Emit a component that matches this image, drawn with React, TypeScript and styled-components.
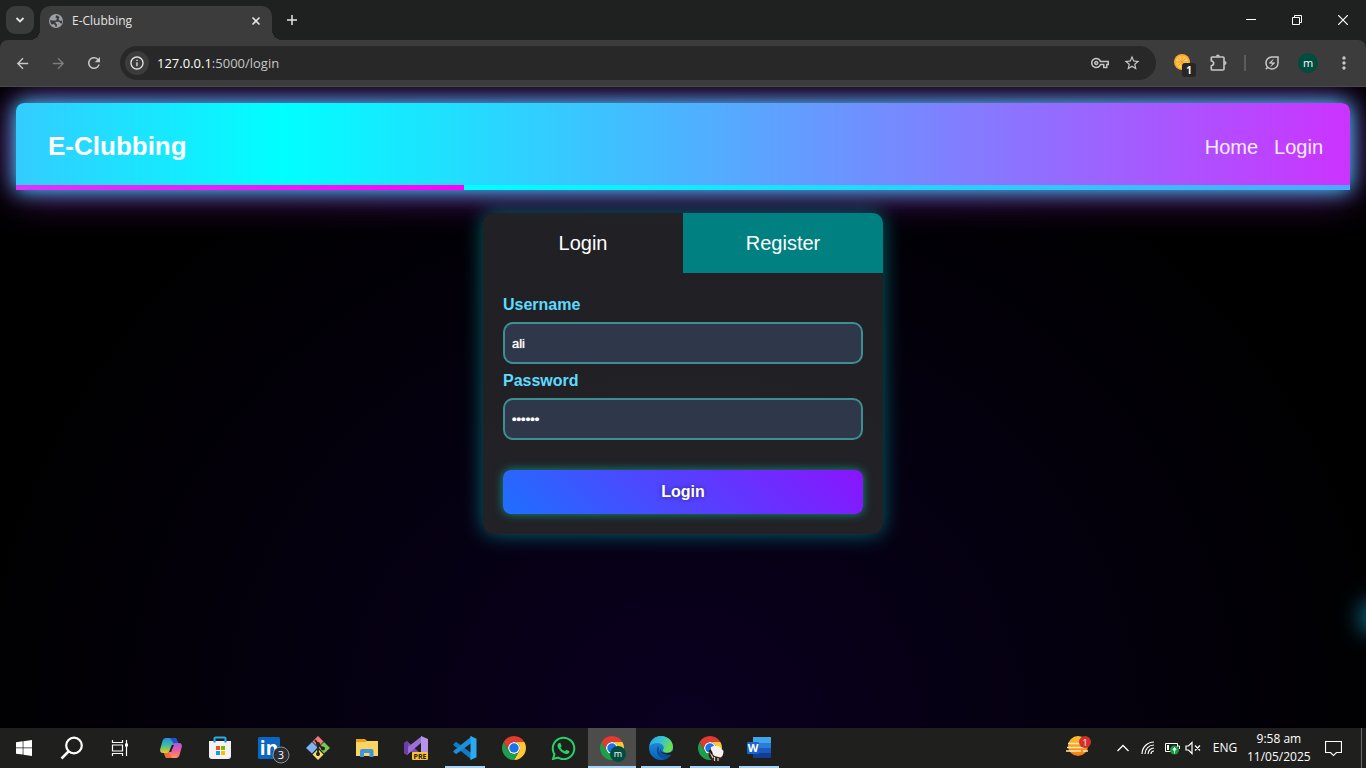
import React from "react";
import styled, { createGlobalStyle } from "styled-components";
import {
  MdArrowBack, MdArrowForward, MdRefresh, MdInfoOutline, MdStarOutline,
  MdOutlineVpnKey, MdOutlineEnergySavingsLeaf, MdMoreVert,
} from "react-icons/md";
import { FaWhatsapp } from "react-icons/fa";

const ui = `"Segoe UI", "Open Sans", sans-serif`;
const arial = `Arial, "Liberation Sans", sans-serif`;

const GlobalStyle = createGlobalStyle`
  *, *::before, *::after { box-sizing: border-box; }
  body { margin: 0; background: #000; font-family: ${arial}; }
  button { border: 0; padding: 0; background: none; color: inherit; font: inherit; cursor: pointer; }
  svg { display: block; flex: none; }
`;

const Desktop = styled.div`
  display: flex;
  flex-direction: column;
  height: 100vh;
  overflow: hidden;
`;

/* ---------- browser frame ---------- */
const TabStrip = styled.div`
  display: flex;
  height: 40px;
  flex: none;
  background: #1f2120;
  color: #e3e3e3;
  font-family: ${ui};
`;
const TabSearch = styled.button`
  display: grid;
  place-items: center;
  width: 28px;
  height: 28px;
  margin: 6px 6px 0;
  border-radius: 9px;
  background: #3a3b3b;
`;
const Tab = styled.div`
  position: relative;
  display: flex;
  align-items: center;
  gap: 8px;
  width: 232px;
  height: 34px;
  margin-top: 6px;
  padding: 0 9px 5px 8px;
  border-radius: 10px 10px 0 0;
  background: #3c3c3c;
  font-size: 12px;
  line-height: 16px;
  &::before, &::after {
    content: "";
    position: absolute;
    bottom: 0;
    width: 10px;
    height: 10px;
  }
  &::before { right: 100%; background: radial-gradient(circle at 0 0, transparent 10px, #3c3c3c 10px); }
  &::after { left: 100%; background: radial-gradient(circle at 100% 0, transparent 10px, #3c3c3c 10px); }
`;
const TabTitle = styled.span`
  flex: 1;
`;
const PlainButton = styled.button<{ $w: number }>`
  display: grid;
  place-items: center;
  width: ${(p) => p.$w}px;
  height: 100%;
`;
const WindowControls = styled.div`
  display: flex;
  margin-left: auto;
  color: #fff;
`;
const ToolbarBack = styled.div`
  flex: none;
  background: #1f2120;
`;
const Toolbar = styled.div`
  display: flex;
  align-items: center;
  height: 47px;
  padding: 0 4px;
  border-bottom: 1px solid #4a4a4a;
  border-radius: 8px 8px 0 0;
  background: #3c3c3c;
  color: #c7c7c7;
  font-family: ${ui};
`;
const ToolButton = styled.button<{ $dim?: boolean }>`
  display: grid;
  place-items: center;
  width: 36px;
  height: 34px;
  color: ${(p) => (p.$dim ? "#7c7c7c" : "#c7c7c7")};
`;
const Omnibox = styled.div`
  display: flex;
  align-items: center;
  flex: 1;
  height: 34px;
  margin: 0 8px;
  padding: 0 8px 0 5px;
  border-radius: 17px;
  background: #282828;
`;
const SiteInfo = styled.button`
  display: grid;
  place-items: center;
  width: 24px;
  height: 24px;
  margin-right: 8px;
  border-radius: 50%;
  background: #3c3c3c;
  color: #e3e3e3;
`;
const Address = styled.div`
  flex: 1;
  color: #c7c7c7;
  font-size: 13px;
  line-height: 20px;
  b { color: #fff; font-weight: 400; }
`;
const OmniButton = styled.button`
  display: grid;
  place-items: center;
  width: 32px;
  height: 32px;
`;
const Divider = styled.div`
  width: 2px;
  height: 16px;
  margin: 0 8px;
  background: #5c5c5c;
`;
const Avatar = styled.span`
  display: grid;
  place-items: center;
  width: 20px;
  height: 20px;
  border-radius: 50%;
  background: #004d40;
  color: #fff;
  font-size: 11px;
  line-height: 18px;
`;

/* ---------- web page ---------- */
const Page = styled.main`
  position: relative;
  flex: 1;
  min-height: 0;
  padding: 16px;
  overflow: hidden;
  background: radial-gradient(ellipse at bottom, #0a0020 0%, #000 75%);
`;
const Orb = styled.div`
  position: absolute;
  left: calc(100% + 6px);
  bottom: 108px;
  width: 6px;
  height: 6px;
  border-radius: 50%;
  background: #0ff;
  box-shadow: 0 0 24px 10px #1590b8;
`;
const Header = styled.header`
  position: relative;
  display: flex;
  align-items: center;
  justify-content: space-between;
  height: 87px;
  padding: 0 27px 2px 32px;
  border-radius: 8px 8px 0 0;
  color: #fff;
  background: linear-gradient(90deg, #3cf 0%, #0ff 20%, #c3f 100%);
  box-shadow: 0 0 20px #3df, 0 0 40px rgba(204, 51, 255, 0.7);
  &::after {
    content: "";
    position: absolute;
    inset: auto 0 0;
    height: 5px;
    background: linear-gradient(90deg, #d3f 0%, #f0f 33.6%, #0ff 33.6%, #4da8ff 100%);
  }
`;
const Brand = styled.h1`
  margin: 0;
  font-size: 26px;
  line-height: 30px;
`;
const Nav = styled.nav`
  display: flex;
  gap: 16px;
  font-size: 20px;
  line-height: 24px;
  padding-top: 2px;
  a { color: #fff; text-decoration: none; opacity: 0.9; }
`;
const Card = styled.section`
  position: relative;
  width: 400px;
  margin: 23px auto 0;
  border-radius: 10px;
  background: rgba(35, 35, 39, 0.94);
  box-shadow: 0 0 20px rgba(0, 255, 255, 0.4);
`;
const Tabs = styled.div`
  display: flex;
  border-radius: 10px 10px 0 0;
  overflow: hidden;
`;
const TabButton = styled.button<{ $idle?: boolean }>`
  flex: 1;
  height: 60px;
  color: #fff;
  font-size: 20px;
  line-height: 24px;
  background: ${(p) => (p.$idle ? "#008080" : "transparent")};
`;
const Form = styled.form`
  padding: 20px;
`;
const Label = styled.label`
  display: block;
  padding: 3px 0 8px;
  color: #5cdcff;
  font-size: 16px;
  font-weight: 700;
  line-height: 18px;
`;
const Input = styled.input`
  display: block;
  width: 100%;
  height: 42px;
  margin-bottom: 5px;
  padding: 0 7px;
  border: 2px solid #3d8f92;
  border-radius: 10px;
  outline: 0;
  background: #2f384a;
  color: #fff;
  font: 13px ${arial};
  text-shadow: 0 0 1px #fff;
`;
const Submit = styled.button`
  display: block;
  width: 100%;
  height: 44px;
  margin-top: 30px;
  border-radius: 8px;
  color: #fff;
  font-size: 16px;
  font-weight: 700;
  text-shadow: 0 0 5px rgba(0, 0, 0, 0.5);
  background: linear-gradient(45deg, #1e6fff, #8a14ff);
  box-shadow: 0 0 10px rgba(0, 255, 220, 0.5);
`;

/* ---------- taskbar ---------- */
const Taskbar = styled.footer`
  display: flex;
  flex: none;
  height: 40px;
  background: #1f1f1e;
  color: #fff;
  font-family: ${ui};
`;
const SystemButtons = styled.div`
  display: flex;
  margin-right: 3px;
`;
const Apps = styled.div`
  display: flex;
  gap: 1px;
`;
const AppButton = styled.button<{ $state?: "open" | "active" }>`
  position: relative;
  display: grid;
  place-items: center;
  width: 48px;
  height: 40px;
  background: ${(p) => (p.$state === "active" ? "#4c4c4b" : "transparent")};
  &::after {
    content: "";
    position: absolute;
    inset: auto ${(p) => (p.$state === "active" ? 0 : 4)}px 0;
    height: 2px;
    background: ${(p) => (p.$state ? "#a3d3fa" : "transparent")};
  }
`;
const Tray = styled.div`
  display: flex;
  align-items: center;
  margin-left: auto;
`;
const TrayButton = styled.button<{ $w: number }>`
  display: grid;
  place-items: center;
  width: ${(p) => p.$w}px;
  height: 40px;
  font-size: 12px;
  line-height: 18px;
`;
const ShowDesktop = styled.button`
  width: 5px;
  height: 40px;
  margin-left: 4px;
  border-left: 1px solid #6b6b6b;
`;

const Globe = () => (
  <svg width="16" height="16" viewBox="0 0 16 16">
    <circle cx="8" cy="8" r="7" fill="#9aa0a6" />
    <path d="M8.500 2.300L7.300 4.200l1.900 1.400-1.500 1.900H4.200L2.300 6.800q-.5 2.500 1 4.600L5.500 11l1.800 1.200v1.500h1.400l.3-2.200-1.700-1.700.6-1h3.300l1.200 1.500 1.500.2q.4-1.600-.2-3.200L12.400 8l-1.900-1.400 1-2.400q-1.200-1.300-3-1.900z" fill="#3c3c3c" />
  </svg>
);
const Chrome = ({ badge }: { badge?: "m" | "photo" }) => (
  <svg width="28" height="28" viewBox="0 0 28 28">
    <g transform="translate(2 2) scale(0.5)">
      <circle cx="24" cy="24" r="12" fill="#fff" />
      <path fill="#e33b2e" d="M24,12H44.78a24,24,0,0,0-41.56,0L13.61,30A11.99,11.99,0,0,1,24,12Z" />
      <path fill="#fcc934" d="M34.39,30,24,48A24,24,0,0,0,44.78,12H24A11.99,11.99,0,0,1,34.39,30Z" />
      <path fill="#1e9e4a" d="M13.61,30,3.22,12A24,24,0,0,0,24,48L34.39,30a11.99,11.99,0,0,1-20.78,0Z" />
      <circle cx="24" cy="24" r="9.5" fill="#1a73e8" />
    </g>
    {badge === "m" && (
      <>
        <circle cx="20" cy="20" r="8" fill="#004d40" />
        <text x="20" y="23" fill="#fff" fontSize="9" textAnchor="middle" fontFamily="Open Sans">m</text>
      </>
    )}
    {badge === "photo" && (
      <>
        <circle cx="20" cy="20" r="7.500" fill="#3a1f18" />
        <path d="M15 13q5-2.500 9 0l3.500 4q0 5-3 6.500l-6-1.500-4-4z" fill="#f4f1ee" />
        <path d="M14 18l3 6M18.500 23v4M22 24v3" stroke="#d9cdc6" strokeWidth="1.200" />
        <path d="M14 16l2 4" stroke="#1d0f0c" strokeWidth="2" />
      </>
    )}
  </svg>
);

const WindowsLogo = () => (
  <svg width="16" height="16" viewBox="0 0 16 16" fill="#fff">
    <path d="M0 2.200l6.700-.9v6.200H0zM7.400 1.200L16 0v7.500H7.400zM0 8.300h6.700v6.300L0 13.700zM7.400 8.300H16V16l-8.600-1.300z" />
  </svg>
);
const SearchIcon = () => (
  <svg width="24" height="24" viewBox="0 0 24 24" fill="none" stroke="#fff" strokeWidth="2.200">
    <circle cx="14" cy="9.500" r="7.800" />
    <path d="M8.500 15.500l-7 7" strokeWidth="2.500" />
  </svg>
);
const TaskViewIcon = () => (
  <svg width="18" height="18" viewBox="0 0 18 18" fill="none" stroke="#fff" strokeWidth="1.200">
    <path d="M1.500 1v2.500h10V1M1.500 17v-2.500h10V17M1.500 6h10v6h-10zM15.500 1v16" />
    <path d="M14 4.500h3v3h-3z" fill="#fff" stroke="none" />
  </svg>
);
const Copilot = () => (
  <svg width="24" height="24" viewBox="0 0 24 24">
    <defs>
      <linearGradient id="cpA" x1="0" y1="0" x2="0" y2="1">
        <stop offset="0" stopColor="#2a8be8" /><stop offset=".5" stopColor="#3fbf9a" /><stop offset="1" stopColor="#f2c916" />
      </linearGradient>
      <linearGradient id="cpB" x1="0" y1="0" x2="0" y2="1">
        <stop offset="0" stopColor="#a05be8" /><stop offset=".5" stopColor="#ee5aa0" /><stop offset="1" stopColor="#ff9a4d" />
      </linearGradient>
    </defs>
    <path d="M7 2h8.500q2 0 2.500 2l.8 3h-3q-2 0-2.500 2l-2 6q-.8 2-3 2H4q-3.500 0-2.800-4L3.500 5Q4.500 2 7 2z" fill="url(#cpA)" />
    <path d="M17 22H8.500q-2 0-2.500-2l-.8-3h3q2 0 2.500-2l2-6q.8-2 3-2H20q3.500 0 2.800 4L20.500 19q-1 3-3.500 3z" fill="url(#cpB)" />
    <path d="M11 2h4.500q2 0 2.500 2l.8 3h-4.500z" fill="#1c54c9" />
    <path d="M13 22H8.500q-2 0-2.500-2l-.8-3h4.500z" fill="#f26b3c" />
    <path d="M12.800 9h2.200l-3 7h-2z" fill="#1f1f1e" />
  </svg>
);
const Store = () => (
  <svg width="24" height="24" viewBox="0 0 24 24">
    <path d="M6.500 7V2.500q0-1 1-1h9q1 0 1 1V7" fill="none" stroke="#25aee8" strokeWidth="2" />
    <path d="M1 5h22v15q0 3-3 3H4q-3 0-3-3z" fill="#f2f2f2" />
    <path d="M6.500 5v1.500M17.500 5v1.500" stroke="#1687c9" strokeWidth="2" />
    <path d="M8 10h4v4H8z" fill="#f25022" /><path d="M13 10h4v4h-4z" fill="#7fba00" />
    <path d="M8 15h4v4H8z" fill="#00a4ef" /><path d="M13 15h4v4h-4z" fill="#ffb900" />
  </svg>
);
const LinkedInBadge = () => (
  <svg width="42" height="32" viewBox="0 0 42 32">
    <rect x="10" y="5" width="22" height="22" rx="1.500" fill="#0a66c2" />
    <text x="21" y="23" fill="#fff" fontSize="19" fontWeight="700" textAnchor="middle" fontFamily="Open Sans">in</text>
    <circle cx="33" cy="23" r="8" fill="#2b2f33" stroke="#8b8f92" />
    <text x="33" y="27" fill="#fff" fontSize="11" textAnchor="middle" fontFamily="Open Sans">3</text>
  </svg>
);
const GitIcon = () => (
  <svg width="26" height="26" viewBox="0 0 26 26">
    <path d="M13 1l5.500 5.500L13 12 7.500 6.500z" fill="#f37a7a" />
    <path d="M7 7l5.500 5.500L7 18.500 1 13z" fill="#7fb1f5" />
    <path d="M19 7l6 6-6 5.500-5.500-6z" fill="#7cc653" />
    <path d="M13 14l5.500 5.500L13 25l-5.500-5.500z" fill="#f7dc6b" />
    <path d="M10 5l3 4v12M13 9l5 5" fill="none" stroke="#222" strokeWidth="1.800" />
    <circle cx="13" cy="9" r="2" fill="#222" /><circle cx="18" cy="13.500" r="2" fill="#222" /><circle cx="13" cy="19" r="2" fill="#222" />
  </svg>
);
const Folder = () => (
  <svg width="24" height="20" viewBox="0 0 24 20">
    <path d="M1 1h9l2 2h11v4H1z" fill="#e6a11b" />
    <path d="M1 4h9l2-1h11v15H1z" fill="#fcd462" />
    <path d="M5 19v-6q0-2 2-2h9.500q2 0 2 2v6h-4v-4H9v4z" fill="#3b96dd" />
  </svg>
);
const VisualStudio = () => (
  <svg width="26" height="26" viewBox="0 0 26 26">
    <path d="M1 8l3-2 15 14v5L1 11z" fill="#7b4bb8" />
    <path d="M1 18l3 2L19 7V1L1 15z" fill="#9b6fd6" />
    <path d="M1 8l3-2 1 2v10l-1 2-3-2z" fill="#6a3ea8" />
    <path d="M18 1l7 3v18l-7 3z" fill="#b893ea" />
    <rect x="9" y="17" width="16" height="8" rx="1" fill="#fdbf2d" />
    <text x="17" y="24" fontSize="7" fontWeight="700" textAnchor="middle" fontFamily="Open Sans" fill="#222">PRE</text>
  </svg>
);
const VSCode = () => (
  <svg width="26" height="26" viewBox="0 0 26 26">
    <path d="M1.500 9l2-1.700q.6-.4 1.200 0L20 18.500V25L1.700 10.200q-.7-.6-.2-1.200z" fill="#0f7cc4" />
    <path d="M1.500 17l2 1.700q.6.400 1.200 0L20 7.500V1L1.700 15.800q-.7.600-.2 1.200z" fill="#1a8fdb" />
    <path d="M18.500 1l6 2.700v18.600l-6 2.700z" fill="#2baaf2" />
  </svg>
);
const Edge = () => (
  <svg width="26" height="26" viewBox="0 0 26 26">
    <defs>
      <linearGradient id="edgeTop" x1="0" y1="0" x2="1" y2=".4">
        <stop offset="0" stopColor="#2a9fe6" /><stop offset=".5" stopColor="#35c1d8" /><stop offset="1" stopColor="#6be04f" />
      </linearGradient>
      <linearGradient id="edgeLow" x1="0" y1="0" x2="0" y2="1">
        <stop offset="0" stopColor="#1f9ae0" /><stop offset="1" stopColor="#0b5fb8" />
      </linearGradient>
    </defs>
    <circle cx="13" cy="13" r="12" fill="url(#edgeLow)" />
    <path d="M1.500 11C2.500 5 7 1 13 1c7 0 12 5 12 11 0 3.500-2.500 5.500-5.500 5.500-4 0-5.500-1.500-4-3.500 1.200-2-1-6-6-6-4 0-6.500 1.500-8 3z" fill="url(#edgeTop)" />
    <path d="M10 11c-3 5 0 12 6.500 13 3-.8 5.500-2.500 7-5-6 2.500-12 0-12.500-4-.1-2 0-3-1-4z" fill="#0c4f9e" />
    <path d="M12.500 12.500c-.8 4 3 6.500 7.500 5.500 2-.3 3.500-1 4.300-2l2 2-2.500 1.500C17 21 10.500 18 12.500 12.500z" fill="#1f1f1e" />
  </svg>
);
const Word = () => (
  <svg width="26" height="24" viewBox="0 0 26 24">
    <path d="M7 1h18v6H7z" fill="#41a5ee" /><path d="M7 7h18v5H7z" fill="#2b7cd3" />
    <path d="M7 12h18v5H7z" fill="#185abd" /><path d="M7 17h18v5H7z" fill="#103f91" />
    <rect x="1" y="6" width="12" height="12" rx="1" fill="#1d62c9" />
    <text x="7" y="16" fontSize="11" fontWeight="700" textAnchor="middle" fontFamily="Open Sans" fill="#fff">W</text>
  </svg>
);
const Weather = () => (
  <svg width="28" height="26" viewBox="0 0 28 26">
    <defs>
      <linearGradient id="sun" x1="0" y1="0" x2="0" y2="1">
        <stop offset="0" stopColor="#ffc42e" /><stop offset="1" stopColor="#f07a14" />
      </linearGradient>
    </defs>
    <circle cx="13" cy="11" r="10" fill="url(#sun)" />
    <path d="M3 8.500h12M2 12.500h18M1 16h15M18 16h5" stroke="#ffe9b0" strokeWidth="1.400" />
    <circle cx="20" cy="7" r="6" fill="#d62f2a" />
    <text x="20" y="11" fontSize="9" textAnchor="middle" fontFamily="Open Sans" fill="#fff">1</text>
  </svg>
);
const OrangeExtension = () => (
  <svg width="28" height="28" viewBox="0 0 28 28">
    <circle cx="14" cy="13" r="8" fill="#f9a825" />
    <circle cx="14" cy="13" r="6.300" fill="#ffc861" />
    <path d="M14 7v12M8 13h12M10 9l8 8M18 9l-8 8" stroke="#f9a01b" strokeWidth="1" />
    <rect x="14" y="14" width="14" height="14" rx="3" fill="#262626" />
    <text x="21" y="25" fontSize="10" fontWeight="700" textAnchor="middle" fontFamily="Open Sans" fill="#fff">1</text>
  </svg>
);
const Puzzle = () => (
  <svg width="20" height="20" viewBox="0 0 20 20" fill="none" stroke="currentColor" strokeWidth="1.600" strokeLinejoin="round">
    <path d="M4 4h11q1 0 1 1v11q0 1-1 1H4q-.7 0-.7-.7v-3.600q2.400-.4 2.400-2.400T3.300 8V4.700Q3.300 4 4 4z" />
    <path d="M8 3.500q0-2 1.900-2t1.900 2zM16.500 8q2 0 2 2t-2 2z" fill="currentColor" stroke="none" />
  </svg>
);
const Stroke = ({ w, h, d, sw = 1 }: { w: number; h: number; d: string; sw?: number }) => (
  <svg width={w} height={h} viewBox={`0 0 ${w} ${h}`} fill="none" stroke="currentColor" strokeWidth={sw}>
    <path d={d} />
  </svg>
);
const Battery = () => (
  <svg width="16" height="14" viewBox="0 0 16 14">
    <path d="M1.500 2.500h12v8h-12zM14 5h1.500v3" fill="none" stroke="#fff" />
    <path d="M3 4h2v5H3z" fill="#fff" />
    <circle cx="10.500" cy="9" r="4.500" fill="#169b3e" />
    <path d="M10.500 6.500l1.500 2-1.500 1.500L9 8.500zM10.500 10v2.500" fill="#fff" stroke="#fff" strokeWidth=".8" />
  </svg>
);

export default function App() {
  return (
    <Desktop>
      <GlobalStyle />
      <TabStrip>
        <TabSearch aria-label="Search tabs"><Stroke w={10} h={6} d="M1.500 1l3.500 3.500L8.500 1" sw={1.8} /></TabSearch>
        <Tab>
          <Globe />
          <TabTitle>E-Clubbing</TabTitle>
          <PlainButton $w={14} aria-label="Close tab"><Stroke w={10} h={10} d="M1.500 1.500l7 7M8.500 1.500l-7 7" sw={1.6} /></PlainButton>
        </Tab>
        <PlainButton $w={40} aria-label="New tab"><Stroke w={12} h={12} d="M6 1v10M1 6h10" sw={1.5} /></PlainButton>
        <WindowControls>
          <PlainButton $w={46} aria-label="Minimize"><Stroke w={10} h={10} d="M0 4.500h10" /></PlainButton>
          <PlainButton $w={46} aria-label="Restore"><Stroke w={10} h={10} d="M.5 2.500h7v7h-7zM2.500 2.500v-2h7v7h-2" /></PlainButton>
          <PlainButton $w={46} aria-label="Close"><Stroke w={10} h={10} d="M0 0l10 10M10 0L0 10" sw={1.2} /></PlainButton>
        </WindowControls>
      </TabStrip>
      <ToolbarBack>
        <Toolbar>
          <ToolButton aria-label="Back"><MdArrowBack size={17} /></ToolButton>
          <ToolButton aria-label="Forward" $dim><MdArrowForward size={17} /></ToolButton>
          <ToolButton aria-label="Reload"><MdRefresh size={18} /></ToolButton>
          <Omnibox>
            <SiteInfo aria-label="Site information"><MdInfoOutline size={16} /></SiteInfo>
            <Address><b>127.0.0.1</b>:5000/login</Address>
            <OmniButton aria-label="Passwords"><MdOutlineVpnKey size={18} /></OmniButton>
            <OmniButton aria-label="Bookmark"><MdStarOutline size={18} /></OmniButton>
          </Omnibox>
          <ToolButton aria-label="Orange extension"><OrangeExtension /></ToolButton>
          <ToolButton aria-label="Extensions"><Puzzle /></ToolButton>
          <Divider />
          <ToolButton aria-label="Energy saver"><MdOutlineEnergySavingsLeaf size={18} /></ToolButton>
          <ToolButton aria-label="Profile"><Avatar>m</Avatar></ToolButton>
          <ToolButton aria-label="Menu"><MdMoreVert size={20} /></ToolButton>
        </Toolbar>
      </ToolbarBack>

      <Page>
        <Orb />
        <Header>
          <Brand>E-Clubbing</Brand>
          <Nav><a href="#home">Home</a><a href="#login">Login</a></Nav>
        </Header>
        <Card>
          <Tabs>
            <TabButton type="button">Login</TabButton>
            <TabButton type="button" $idle>Register</TabButton>
          </Tabs>
          <Form onSubmit={(e) => e.preventDefault()}>
            <Label htmlFor="username">Username</Label>
            <Input id="username" type="text" defaultValue="ali" />
            <Label htmlFor="password">Password</Label>
            <Input id="password" type="password" defaultValue="ali123" />
            <Submit type="submit">Login</Submit>
          </Form>
        </Card>
      </Page>

      <Taskbar>
        <SystemButtons>
          <AppButton aria-label="Start"><WindowsLogo /></AppButton>
          <AppButton aria-label="Search"><SearchIcon /></AppButton>
          <AppButton aria-label="Task view"><TaskViewIcon /></AppButton>
        </SystemButtons>
        <Apps>
          <AppButton aria-label="Copilot"><Copilot /></AppButton>
          <AppButton aria-label="Store"><Store /></AppButton>
          <AppButton aria-label="LinkedIn"><LinkedInBadge /></AppButton>
          <AppButton aria-label="Git"><GitIcon /></AppButton>
          <AppButton aria-label="File Explorer"><Folder /></AppButton>
          <AppButton aria-label="Visual Studio Preview"><VisualStudio /></AppButton>
          <AppButton aria-label="Visual Studio Code" $state="open"><VSCode /></AppButton>
          <AppButton aria-label="Chrome"><Chrome /></AppButton>
          <AppButton aria-label="WhatsApp"><FaWhatsapp size={27} color="#25d366" /></AppButton>
          <AppButton aria-label="Chrome, profile m" $state="active"><Chrome badge="m" /></AppButton>
          <AppButton aria-label="Edge" $state="open"><Edge /></AppButton>
          <AppButton aria-label="Chrome, second profile" $state="open"><Chrome badge="photo" /></AppButton>
          <AppButton aria-label="Word" $state="open"><Word /></AppButton>
        </Apps>
        <Tray>
          <TrayButton $w={64} aria-label="Weather"><Weather /></TrayButton>
          <TrayButton $w={24} aria-label="Hidden icons"><Stroke w={12} h={8} d="M.5 7L6 1.500 11.500 7" sw={1.3} /></TrayButton>
          <TrayButton $w={26} aria-label="Network">
            <Stroke w={14} h={14} d="M1 13A12 12 0 0 1 13 1M4 13A9 9 0 0 1 13 4M7 13A6 6 0 0 1 13 7M10 13A3 3 0 0 1 13 10" sw={1.2} />
          </TrayButton>
          <TrayButton $w={22} aria-label="Battery"><Battery /></TrayButton>
          <TrayButton $w={20} aria-label="Volume">
            <Stroke w={16} h={14} d="M1 5h2.500L7 1.500v11L3.500 9H1zM10 4.500l5 5M15 4.500l-5 5" sw={1.2} />
          </TrayButton>
          <TrayButton $w={44}>ENG</TrayButton>
          <TrayButton $w={62}><span>9:58 am<br />11/05/2025</span></TrayButton>
          <TrayButton $w={48} aria-label="Notifications">
            <Stroke w={17} h={17} d="M.5 1.500h16v11h-5L8.500 15.500 5.500 12.500h-5z" sw={1.2} />
          </TrayButton>
          <ShowDesktop aria-label="Show desktop" />
        </Tray>
      </Taskbar>
    </Desktop>
  );
}
